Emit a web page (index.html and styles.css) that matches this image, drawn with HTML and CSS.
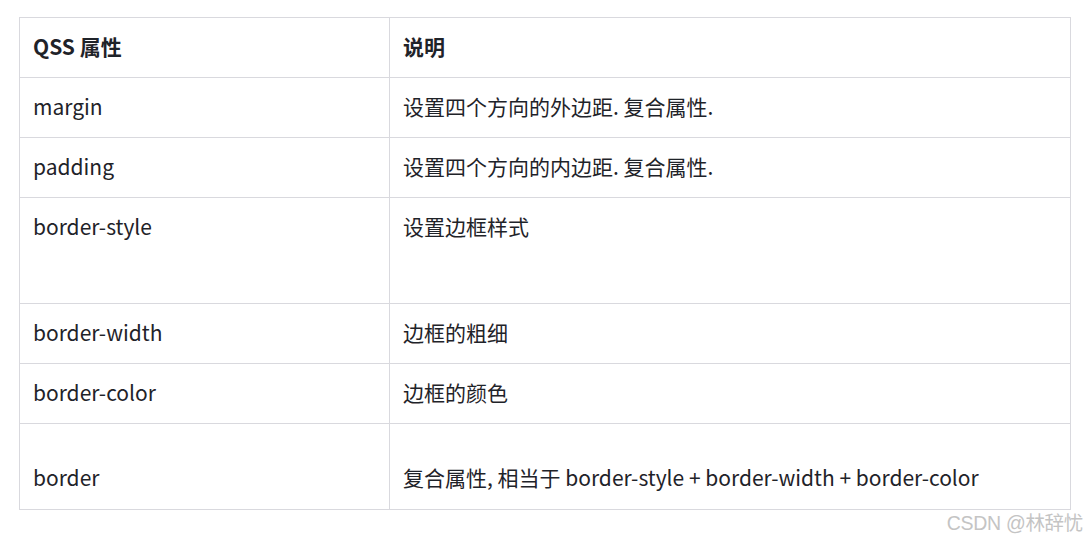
FILE: index.html
```html
<!DOCTYPE html>
<html lang="zh">
<head>
<meta charset="utf-8">
<link rel="stylesheet" href="styles.css">
</head>
<body>
<div class="page">
  <table class="qss">
    <colgroup><col class="c1"><col class="c2"></colgroup>
    <thead>
      <tr><th>QSS 属性</th><th>说明</th></tr>
    </thead>
    <tbody>
      <tr><td>margin</td><td>设置四个方向的外边距. 复合属性.</td></tr>
      <tr><td>padding</td><td>设置四个方向的内边距. 复合属性.</td></tr>
      <tr class="tall"><td>border-style</td><td>设置边框样式</td></tr>
      <tr><td>border-width</td><td>边框的粗细</td></tr>
      <tr><td>border-color</td><td>边框的颜色</td></tr>
      <tr class="last"><td>border</td><td>复合属性, 相当于 border-style + border-width + border-color</td></tr>
    </tbody>
  </table>
  <div class="mark">CSDN @林辞忧</div>
</div>
</body>
</html>
```
FILE: styles.css
```css
html, body {
  margin: 0;
  padding: 0;
  background: #ffffff;
}
.page {
  position: relative;
  width: 1087px;
  height: 537px;
  padding: 17px 0 0 19px;
  box-sizing: border-box;
}
.qss {
  border-collapse: collapse;
  width: 1052px;
  table-layout: fixed;
  font-family: "Noto Sans CJK SC", "Noto Sans", sans-serif;
  font-size: 21px;
  color: #1f2329;
}
.c1 { width: 370px; }
.qss th, .qss td {
  border: 1px solid #d9d9de;
  padding: 0 13px;
  height: 60px;
  line-height: 57px;
  text-align: left;
  vertical-align: top;
  box-sizing: border-box;
  white-space: nowrap;
}
.qss th { font-weight: 700; }
.qss tr.tall td { height: 106px; }
.qss tr.last td {
  height: 86px;
  padding-top: 38px;
  line-height: 30px;
}
.mark {
  position: absolute;
  right: 4px;
  top: 507px;
  font-family: "Liberation Sans", "Noto Sans CJK SC", sans-serif;
  font-size: 19.5px;
  color: #c4c4c4;
  letter-spacing: -0.3px;
}
```
